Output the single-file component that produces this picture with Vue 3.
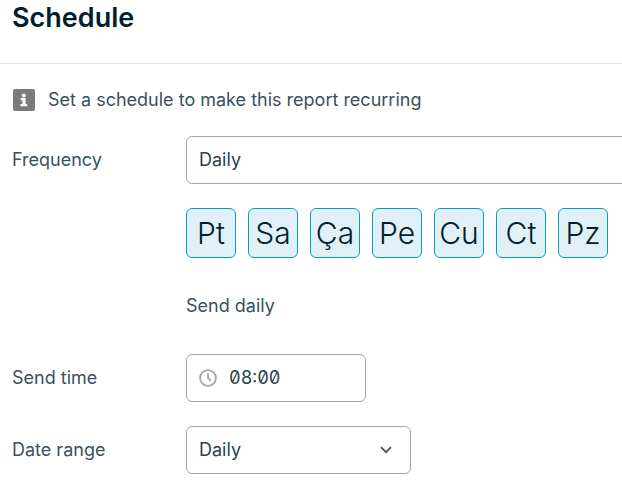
<script setup>
import { ref } from 'vue'

const frequency = ref('Daily')
const range = ref('Daily')
const time = ref('08:00')
const days = ref(['Pt', 'Sa', 'Ça', 'Pe', 'Cu', 'Ct', 'Pz'].map((name) => ({ name, on: true })))
</script>

<template>
  <main class="schedule">
    <header class="header">
      <h1 class="title">Schedule</h1>
    </header>
    <form class="form" @submit.prevent>
      <p class="note">
        <svg class="info" viewBox="0 0 24 24" aria-hidden="true">
          <rect x="1" y="1" width="22" height="22" rx="2" fill="#7b7b7b" />
          <circle cx="11.8" cy="7.5" r="2" fill="#fff" />
          <path d="M8.6 10h5v6h1.6v2.2H8.5V16h1.8v-3.8H8.6z" fill="#fff" />
        </svg>
        <span>Set a schedule to make this report recurring</span>
      </p>

      <div class="row">
        <label for="frequency">Frequency</label>
        <select id="frequency" v-model="frequency" class="control wide">
          <option>Daily</option>
          <option>Weekly</option>
          <option>Monthly</option>
        </select>
      </div>

      <div class="row">
        <div class="days">
          <button
            v-for="day in days"
            :key="day.name"
            type="button"
            class="day"
            :class="{ on: day.on }"
            :aria-pressed="day.on"
            @click="day.on = !day.on"
          >{{ day.name }}</button>
        </div>
      </div>

      <div class="row">
        <p class="summary">Send daily</p>
      </div>

      <div class="row">
        <label for="time">Send time</label>
        <div class="control time">
          <svg class="clock" viewBox="0 0 18 18" fill="none" stroke="#9ea6b8" aria-hidden="true">
            <circle cx="9" cy="9" r="7.9" stroke-width="1.8" />
            <path d="M9 4.2V9l2.7 2.7" stroke-width="1.8" />
          </svg>
          <input id="time" v-model="time" type="text" class="time-input" />
        </div>
      </div>

      <div class="row">
        <label for="range">Date range</label>
        <div class="picker">
          <select id="range" v-model="range" class="control">
            <option>Daily</option>
            <option>Weekly</option>
            <option>Monthly</option>
          </select>
          <svg class="chevron" viewBox="0 0 12 8" fill="none" stroke="#4a5568" stroke-width="1.8" aria-hidden="true">
            <path d="M1 1.2l5 5 5-5" />
          </svg>
        </div>
      </div>
    </form>
  </main>
</template>

<style>
body {
  background: #fff;
}
</style>

<style scoped>
.schedule {
  overflow: hidden;
  color: #3a505d;
  font: 400 18px/24px Inter, "Liberation Sans", sans-serif;
}

.header {
  padding: 2px 12px 29px;
  border-bottom: 1px solid #dfe0eb;
}

.title {
  margin: 0;
  color: #011e2f;
  font-size: 27px;
  font-weight: 600;
  line-height: 32px;
}

.form {
  display: flex;
  flex-direction: column;
  gap: 24px;
  padding: 24px 0 7px 12px;
}

.note {
  display: flex;
  align-items: center;
  gap: 12px;
  margin: 0;
}

.info {
  width: 24px;
  height: 24px;
}

.row {
  display: grid;
  grid-template-columns: 162px 1fr;
  column-gap: 12px;
  align-items: center;
}

.row > * {
  grid-row: 1;
}

.days,
.summary {
  grid-column: 2;
}

.control {
  box-sizing: border-box;
  width: 100%;
  height: 48px;
  padding: 0 12px;
  border: 1px solid #9ea6b8;
  border-radius: 6px;
  background: #fff;
  color: #2a414f;
  font: inherit;
  appearance: none;
}

.wide {
  min-width: 480px;
}

.days {
  display: flex;
  gap: 12px;
}

.day {
  box-sizing: border-box;
  width: 50px;
  height: 50px;
  padding: 0;
  border: 1px solid #9ea6b8;
  border-radius: 6px;
  background: #fff;
  color: #011e2f;
  font: inherit;
  font-size: 30px;
  font-weight: 300;
}

.day.on {
  border-color: #00a0c6;
  background: #e1eff6;
}

.summary {
  margin: 0;
  padding: 12px 0;
}

.time {
  display: flex;
  align-items: center;
  gap: 12px;
  width: 180px;
}

.clock {
  flex: none;
  width: 18px;
  height: 18px;
}

.time-input {
  width: 100%;
  min-width: 0;
  padding: 0;
  border: 0;
  background: none;
  color: inherit;
  font: inherit;
  font-feature-settings: "zero", "tnum";
}

.picker {
  display: grid;
  align-items: center;
  width: 225px;
}

.picker > * {
  grid-area: 1 / 1;
}

.chevron {
  justify-self: end;
  width: 12px;
  height: 8px;
  margin-right: 19px;
  pointer-events: none;
}
</style>
